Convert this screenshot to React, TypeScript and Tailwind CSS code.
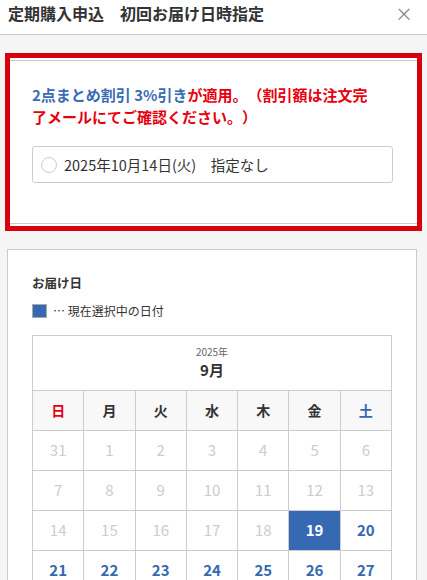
import React from 'react'

const font = { fontFamily: '"Noto Sans CJK JP", "Noto Sans", sans-serif' }

type Day = { n: number; state: 'off' | 'on' | 'sel' }

const weeks: Day[][] = [
  [31, 1, 2, 3, 4, 5, 6].map((n) => ({ n, state: 'off' as const })),
  [7, 8, 9, 10, 11, 12, 13].map((n) => ({ n, state: 'off' as const })),
  [14, 15, 16, 17, 18, 19, 20].map((n) => ({
    n,
    state: n === 19 ? ('sel' as const) : n === 20 ? ('on' as const) : ('off' as const),
  })),
  [21, 22, 23, 24, 25, 26, 27].map((n) => ({ n, state: 'on' as const })),
]

const weekdays = ['日', '月', '火', '水', '木', '金', '土']

function DayCell({ d }: { d: Day }) {
  if (d.state === 'sel') {
    return (
      <td className="h-[40px] border border-[#cccccc] bg-[#3569b2] text-center text-[15px] font-bold text-white">
        {d.n}
      </td>
    )
  }
  if (d.state === 'on') {
    return (
      <td className="h-[40px] border border-[#cccccc] text-center text-[15px] font-bold text-[#3569b2]">{d.n}</td>
    )
  }
  return <td className="h-[40px] border border-[#cccccc] text-center text-[15px] text-[#cccccc]">{d.n}</td>
}

export default function App() {
  return (
    <div
      className="min-h-[580px] w-[427px] overflow-hidden bg-[#f5f5f5] text-[#333333] [text-spacing-trim:space-all]"
      style={font}
    >
      {/* header */}
      <div className="flex h-[35px] items-start justify-between border-b border-[#cccccc] bg-white pl-[8px] pr-[14px] pt-[2px]">
        <h1 className="text-[16px] font-bold leading-[22px] text-[#333333]">定期購入申込　初回お届け日時指定</h1>
        <span className="text-[18px] leading-[22px] text-[#888888]">×</span>
      </div>

      <div className="pt-[18px]">
        {/* highlighted card */}
        <div className="mx-[5px] border-[5px] border-[#d7000f] bg-white py-[2px]">
          <div className="border-y border-[#cccccc] pb-[40px] pl-[22px] pr-[24px] pt-[23px]">
            <p className="text-[15px] font-bold leading-[22px]">
              <span className="text-[#3a6cb5]">2点まとめ割引 3%引き</span>
              <span className="text-[#e8000f]">
                が適用。（割引額は注文完
                <br />
                了メールにてご確認ください。）
              </span>
            </p>
            <label className="mt-[18px] flex h-[37px] items-center gap-[7px] rounded-[3px] border border-[#cccccc] px-[8px]">
              <span className="h-[16px] w-[16px] rounded-full border border-[#cccccc] bg-white" />
              <span className="text-[14.5px] text-[#333333]">2025年10月14日(火)　指定なし</span>
            </label>
          </div>
        </div>

        {/* delivery date card */}
        <div className="mx-[7px] mt-[18px] w-[410px] border border-[#cccccc] bg-white px-[24px] pt-[23px] pb-[30px]">
          <h2 className="text-[12.5px] font-bold leading-[20px]">お届け日</h2>
          <div className="mt-[11px] flex items-center gap-[6px]">
            <span className="h-[14px] w-[15px] border border-[#aaaaaa] bg-[#3569b2]" />
            <span className="text-[12px] leading-[14px] text-[#333333]">… 現在選択中の日付</span>
          </div>

          <div className="mt-[17px] w-[360px] border border-[#cccccc]">
            <div className="flex h-[54px] flex-col items-center justify-center">
              <span className="text-[10px] leading-[14px] text-[#666666]">2025年</span>
              <span className="text-[15px] font-bold leading-[22px] text-[#333333]">9月</span>
            </div>
            <table className="-mb-px -ml-px w-[360px] table-fixed border-collapse">
              <thead>
                <tr>
                  {weekdays.map((w, i) => (
                    <th
                      key={w}
                      className={`h-[40px] border border-[#cccccc] bg-[#f8f8f8] text-center text-[14px] font-bold ${
                        i === 0 ? 'text-[#e60012]' : i === 6 ? 'text-[#3569b2]' : 'text-[#333333]'
                      }`}
                    >
                      {w}
                    </th>
                  ))}
                </tr>
              </thead>
              <tbody>
                {weeks.map((wk, r) => (
                  <tr key={r}>
                    {wk.map((d) => (
                      <DayCell key={d.n} d={d} />
                    ))}
                  </tr>
                ))}
              </tbody>
            </table>
          </div>
        </div>
      </div>
    </div>
  )
}
